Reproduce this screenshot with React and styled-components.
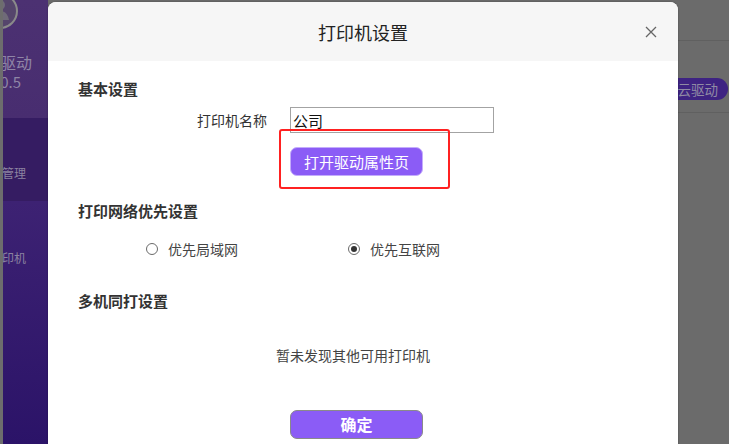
import React from 'react';
import styled, { createGlobalStyle } from 'styled-components';

const GlobalStyle = createGlobalStyle`
  html, body { margin: 0; padding: 0; background: #6b6b6b; }
  body {
    font-family: "Noto Sans CJK SC", "Noto Sans", sans-serif;
    overflow: hidden;
  }
  * { box-sizing: border-box; }
`;

const Screen = styled.div`
  position: relative;
  width: 729px;
  height: 444px;
  overflow: hidden;
  display: grid;
  grid-template-columns: 3px 45px 1fr;
  background: #6b6b6b;
`;

const EdgeStrip = styled.div`
  background: #6d6d6d;
`;

const SidebarViewport = styled.div`
  display: flex;
  justify-content: flex-end;
  overflow: hidden;
`;

const Sidebar = styled.nav`
  flex: 0 0 96px;
  width: 96px;
  display: flex;
  flex-direction: column;
  background: linear-gradient(180deg, #4c3172 0, #482d70 118px, #3d2273 201px, #2b1368 100%);
`;

const Brand = styled.div`
  height: 118px;
  display: flex;
  flex-direction: column;
  align-items: center;
`;

const Logo = styled.svg`
  width: 38px;
  height: 38px;
  margin-top: -8px;
  flex: 0 0 auto;
`;

const BrandName = styled.div`
  margin-top: 22px;
  font-size: 16px;
  line-height: 20px;
  color: #8f85a6;
  white-space: nowrap;
`;

const BrandVersion = styled.div`
  margin-top: 1px;
  font-size: 15px;
  line-height: 18px;
  color: #8f85a6;
  white-space: nowrap;
`;

const MenuItem = styled.div`
  height: 83px;
  padding: 25px 8px 0 0;
  display: flex;
  flex-direction: column;
  align-items: center;
  gap: ${(p) => (p.$active ? 8 : 10)}px;
  background: ${(p) => (p.$active ? '#351c62' : 'transparent')};
  color: #8b82a0;
`;

const MenuIcon = styled.svg`
  width: 14px;
  height: 14px;
  flex: 0 0 auto;
`;

const MenuText = styled.span`
  font-size: 12px;
  line-height: 16px;
  white-space: nowrap;
`;

const Main = styled.main`
  display: flex;
  flex-direction: column;
  background: #6b6b6b;
`;

const TopBar = styled.div`
  height: 41px;
  border-bottom: 1px solid #606060;
`;

const ToolBar = styled.div`
  height: 72px;
  display: flex;
  justify-content: flex-end;
  align-items: flex-end;
  padding: 0 1px 12px 0;
  border-bottom: 1px solid #606060;
`;

const PillButton = styled.div`
  height: 22px;
  padding: 0 10px 0 14px;
  border-radius: 11px;
  background: #3e2382;
  color: #908ba4;
  font-size: 13.5px;
  line-height: 22px;
  white-space: nowrap;
`;

const Dialog = styled.section`
  position: absolute;
  left: 48px;
  top: 2px;
  width: 630px;
  height: 470px;
  background: #ffffff;
  border-radius: 8px 8px 0 0;
  box-shadow: 0 0 2px rgba(0, 0, 0, 0.35);
  display: flex;
  flex-direction: column;
  overflow: hidden;
`;

const DialogHeader = styled.header`
  height: 59px;
  flex: 0 0 auto;
  background: #f6f6f6;
  display: grid;
  grid-template-columns: 1fr auto 1fr;
  align-items: center;
`;

const DialogTitle = styled.h1`
  grid-column: 2;
  margin: 0;
  font-size: 18px;
  font-weight: normal;
  line-height: 24px;
  color: #222;
`;

const CloseButton = styled.button`
  grid-column: 3;
  justify-self: end;
  margin-right: 21px;
  width: 12px;
  height: 12px;
  padding: 0;
  border: 0;
  background: none;
  display: flex;
`;

const DialogBody = styled.div`
  padding: 0 30px;
  display: flex;
  flex-direction: column;
`;

const SectionTitle = styled.h2`
  margin: ${(p) => p.$gap}px 0 0;
  font-size: 15px;
  font-weight: bold;
  line-height: 20px;
  color: #333;
`;

const FieldRow = styled.div`
  margin-top: 8px;
  height: 26px;
  display: flex;
  align-items: center;
`;

const FieldLabel = styled.label`
  width: 189px;
  margin-right: 23px;
  text-align: right;
  font-size: 14px;
  line-height: 20px;
  color: #333;
`;

const TextInput = styled.input`
  width: 204px;
  height: 26px;
  padding: 0 2px;
  border: 1px solid #a3a3a3;
  border-radius: 0;
  outline: none;
  background: #fff;
  font-family: inherit;
  font-size: 15px;
  color: #111;
`;

const ActionRow = styled.div`
  margin-top: ${(p) => p.$gap}px;
  padding-left: 212px;
  display: flex;
`;

const Highlight = styled.div`
  position: relative;
  display: flex;
`;

const AnnotationBox = styled.span`
  position: absolute;
  top: -18px;
  left: -11px;
  right: -27px;
  bottom: -13px;
  border: 2px solid #ff2121;
  border-radius: 3px;
  pointer-events: none;
`;

const PrimaryButton = styled.button`
  width: 133px;
  height: 29px;
  padding: 0;
  border-radius: 7px;
  border: 1px solid ${(p) => (p.$focused ? '#8a8a8a' : '#c4adfb')};
  background: #8b5cf6;
  color: #fff;
  font-family: inherit;
  font-size: ${(p) => (p.$large ? 16 : 15)}px;
  font-weight: ${(p) => (p.$large ? 'bold' : 'normal')};
  line-height: 27px;
`;

const RadioGroup = styled.div`
  margin-top: 18px;
  height: 20px;
  padding-left: 68px;
  display: flex;
  align-items: center;
`;

const RadioOption = styled.label`
  width: 202px;
  display: flex;
  align-items: center;
  gap: 10px;
  font-size: 14px;
  line-height: 20px;
  color: #444;
`;

const RadioDot = styled.span`
  width: 12px;
  height: 12px;
  flex: 0 0 auto;
  border-radius: 50%;
  border: 1px solid #6a6a6a;
  background: #fff;
  display: flex;
  align-items: center;
  justify-content: center;

  &::after {
    content: '';
    width: 6px;
    height: 6px;
    border-radius: 50%;
    background: ${(p) => (p.$checked ? '#333' : 'transparent')};
  }
`;

const EmptyMessage = styled.p`
  margin: 34px 0 0;
  padding-right: 20px;
  text-align: center;
  font-size: 14px;
  line-height: 20px;
  color: #444;
`;

export default function App() {
  return (
    <>
      <GlobalStyle />
      <Screen>
        <EdgeStrip />
        <SidebarViewport>
          <Sidebar>
            <Brand>
              <Logo viewBox="0 0 38 38">
                <circle cx="19" cy="19" r="17" fill="#55456c" stroke="#8a8a8a" strokeWidth="2" />
                <path d="M10 28c1-6 4-9 9-9s8 3 9 9z" fill="#6f6a78" />
                <circle cx="19" cy="13" r="5" fill="#6f6a78" />
              </Logo>
              <BrandName>打印驱动</BrandName>
              <BrandVersion>V1.0.5</BrandVersion>
            </Brand>
            <MenuItem $active>
              <MenuIcon viewBox="0 0 14 14">
                <rect x="2" y="2" width="10" height="10" rx="2" fill="none" stroke="#8b82a0" strokeWidth="1.4" />
              </MenuIcon>
              <MenuText>打印机管理</MenuText>
            </MenuItem>
            <MenuItem>
              <MenuIcon viewBox="0 0 14 14">
                <path d="M3 5h8v5H3z M5 2h4v3H5z" fill="none" stroke="#8b82a0" strokeWidth="1.4" />
              </MenuIcon>
              <MenuText>添加打印机</MenuText>
            </MenuItem>
          </Sidebar>
        </SidebarViewport>
        <Main>
          <TopBar />
          <ToolBar>
            <PillButton>下载云驱动</PillButton>
          </ToolBar>
        </Main>

        <Dialog>
          <DialogHeader>
            <DialogTitle>打印机设置</DialogTitle>
            <CloseButton aria-label="关闭">
              <svg width="12" height="12" viewBox="0 0 12 12">
                <path d="M1 1L11 11M11 1L1 11" stroke="#666" strokeWidth="1.3" />
              </svg>
            </CloseButton>
          </DialogHeader>
          <DialogBody>
            <SectionTitle $gap={18}>基本设置</SectionTitle>
            <FieldRow>
              <FieldLabel>打印机名称</FieldLabel>
              <TextInput value="公司" readOnly />
            </FieldRow>
            <ActionRow $gap={14}>
              <Highlight>
                <PrimaryButton>打开驱动属性页</PrimaryButton>
                <AnnotationBox />
              </Highlight>
            </ActionRow>

            <SectionTitle $gap={25}>打印网络优先设置</SectionTitle>
            <RadioGroup>
              <RadioOption>
                <RadioDot />
                优先局域网
              </RadioOption>
              <RadioOption>
                <RadioDot $checked />
                优先互联网
              </RadioOption>
            </RadioGroup>

            <SectionTitle $gap={32}>多机同打设置</SectionTitle>
            <EmptyMessage>暂未发现其他可用打印机</EmptyMessage>

            <ActionRow $gap={45}>
              <PrimaryButton $large $focused>确定</PrimaryButton>
            </ActionRow>
          </DialogBody>
        </Dialog>
      </Screen>
    </>
  );
}
